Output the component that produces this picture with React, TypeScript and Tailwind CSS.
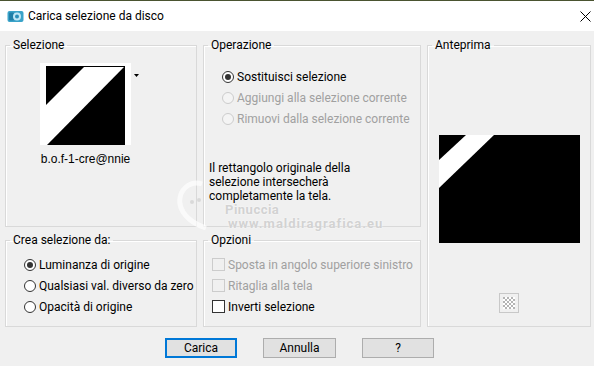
import React from "react";

const font = { fontFamily: 'Roboto, "Noto Sans", sans-serif' };

function Radio({ checked, disabled, label }: { checked?: boolean; disabled?: boolean; label: string }) {
  return (
    <div className="flex items-center h-[21px] whitespace-nowrap">
      <span
        className={
          "w-[12px] h-[12px] shrink-0 rounded-full border flex items-center justify-center " +
          (disabled ? "border-[#cccccc] bg-[#f4f4f4]" : "border-[#333333] bg-white")
        }
      >
        {checked && <span className="w-[6px] h-[6px] rounded-full bg-[#333333]" />}
      </span>
      <span className={"ml-[3px] " + (disabled ? "text-[#a0a0a0]" : "text-black")}>{label}</span>
    </div>
  );
}

function Check({ disabled, label }: { disabled?: boolean; label: string }) {
  return (
    <div className="flex items-center h-[21px] whitespace-nowrap">
      <span
        className={
          "w-[13px] h-[13px] shrink-0 border " +
          (disabled ? "border-[#cccccc] bg-[#f0f0f0]" : "border-[#333333] bg-white")
        }
      />
      <span className={"ml-[3px] " + (disabled ? "text-[#a0a0a0]" : "text-black")}>{label}</span>
    </div>
  );
}

function Group({ title, className, children }: { title: string; className?: string; children?: React.ReactNode }) {
  return (
    <fieldset
      className={
        "border border-[#d9d9d9] shadow-[inset_1px_1px_0_#ffffff] min-w-0 " + (className ?? "")
      }
    >
      <legend className="ml-[4px] px-[3px] text-[12px] leading-[14px] text-black whitespace-nowrap">{title}</legend>
      {children}
    </fieldset>
  );
}

export default function App() {
  return (
    <div className="w-[594px] h-[366px] bg-[#f0f0f0] overflow-hidden relative text-[12px] leading-[14px]" style={font}>
      {/* title bar */}
      <div className="h-[31px] bg-white border-t border-[#4a5330] flex items-center">
        <svg className="ml-[7px]" width="17" height="15" viewBox="0 0 17 15">
          <rect x="0.5" y="2" width="16" height="11" rx="2" fill="#3aa3c9" />
          <rect x="2" y="3.5" width="5" height="8" rx="1" fill="#1f7fa8" />
          <circle cx="10" cy="7.5" r="4" fill="#bfe6f5" />
          <circle cx="10" cy="7.5" r="2" fill="#2b8fb9" />
        </svg>
        <span className="ml-[4px] text-[12px] text-black">Carica selezione da disco</span>
        <svg className="ml-auto mr-[3px]" width="11" height="11" viewBox="0 0 11 11">
          <path d="M0.5 0.5 L10.5 10.5 M10.5 0.5 L0.5 10.5" stroke="#000" strokeWidth="1" />
        </svg>
      </div>

      {/* body */}
      <div className="grid grid-cols-[192px_218px_164px] grid-rows-[189px_94px] gap-x-[6px] gap-y-[6px] pl-[5px] pt-[7px]">
        <Group title="Selezione">
          <div className="flex items-start pl-[34px] pt-[11px]">
            <div className="flex flex-col items-center">
              <svg width="91" height="82" viewBox="0 0 91 82">
                <rect width="91" height="82" fill="#fff" />
                <rect x="6" y="3" width="79" height="1" fill="#000" />
                <polygon points="6,3 45,3 6,42" fill="#000" />
                <polygon points="85,3 85,82 7,82" fill="#000" />
              </svg>
              <div className="mt-[7px] text-[12px] leading-[14px]" style={{ fontFamily: '"Liberation Sans", Arial, sans-serif' }}>
                b.o.f-1-cre@nnie
              </div>
            </div>
            <svg className="ml-[3px] mt-[11px]" width="5" height="3" viewBox="0 0 5 3">
              <polygon points="0,0 5,0 2.5,3" fill="#000" />
            </svg>
          </div>
        </Group>

        <Group title="Operazione">
          <div className="pl-[18px] pt-[14px]">
            <Radio checked label="Sostituisci selezione" />
            <Radio disabled label="Aggiungi alla selezione corrente" />
            <Radio disabled label="Rimuovi dalla selezione corrente" />
          </div>
          <p className="pl-[5px] mt-[32px] leading-[14px] w-[180px]">
            Il rettangolo originale della selezione intersecherà completamente la tela.
          </p>
        </Group>

        <Group title="Anteprima" className="row-span-2">
          <div className="flex flex-col items-center pt-[83px]">
            <svg width="141" height="108" viewBox="0 0 141 108">
              <rect width="141" height="108" fill="#000" />
              <polygon points="27,0 55,0 0,53 0,25" fill="#fff" />
            </svg>
            <div className="mt-[50px] w-[20px] h-[20px] border border-[#c8c8c8] bg-[#f0f0f0] flex items-center justify-center">
              <svg width="12" height="12" viewBox="0 0 12 12">
                <rect width="12" height="12" fill="#ffffff" />
                {[0, 1, 2, 3, 4, 5].map((r) =>
                  [0, 1, 2, 3, 4, 5].map((c) =>
                    (r + c) % 2 === 0 ? <rect key={r + "-" + c} x={c * 2} y={r * 2} width="2" height="2" fill="#b4b4b4" /> : null
                  )
                )}
              </svg>
            </div>
          </div>
        </Group>

        <Group title="Crea selezione da:">
          <div className="pl-[18px] pt-[7px]">
            <Radio checked label="Luminanza di origine" />
            <Radio label="Qualsiasi val. diverso da zero" />
            <Radio label="Opacità di origine" />
          </div>
        </Group>

        <Group title="Opzioni">
          <div className="pl-[8px] pt-[7px]">
            <Check disabled label="Sposta in angolo superiore sinistro" />
            <Check disabled label="Ritaglia alla tela" />
            <Check label="Inverti selezione" />
          </div>
        </Group>
      </div>

      {/* buttons */}
      <div className="flex mt-[11px] pl-[165px] gap-[26px]">
        <button className="w-[72px] h-[20px] bg-[#e1e1e1] border-2 border-[#0078d7] text-[12px] text-black">Carica</button>
        <button className="w-[73px] h-[20px] bg-[#e1e1e1] border border-[#adadad] text-[12px] text-black">Annulla</button>
        <button className="w-[72px] h-[20px] bg-[#e1e1e1] border border-[#adadad] text-[12px] text-black">?</button>
      </div>

      {/* watermark */}
      <div className="absolute left-[172px] top-[180px] pointer-events-none select-none opacity-70">
        <svg width="40" height="50" viewBox="0 0 40 50">
          <path d="M30 4 C18 0 6 10 8 24 C10 36 22 44 34 48" stroke="#ffffff" strokeWidth="5" fill="none" />
          <circle cx="20" cy="22" r="2" fill="#d0d0d0" />
          <circle cx="27" cy="20" r="2" fill="#d0d0d0" />
        </svg>
      </div>
      <div className="absolute left-[225px] top-[204px] pointer-events-none select-none text-[13px] leading-[12px] font-bold tracking-[0.5px] text-[#d2d2d2] [text-shadow:0_0_2px_#ffffff]">
        Pinuccia
      </div>
      <div className="absolute left-[228px] top-[218px] pointer-events-none select-none text-[13px] leading-[12px] font-bold tracking-[1px] text-[#d2d2d2] [text-shadow:0_0_2px_#ffffff]">
        www.maldiragrafica.eu
      </div>
    </div>
  );
}
